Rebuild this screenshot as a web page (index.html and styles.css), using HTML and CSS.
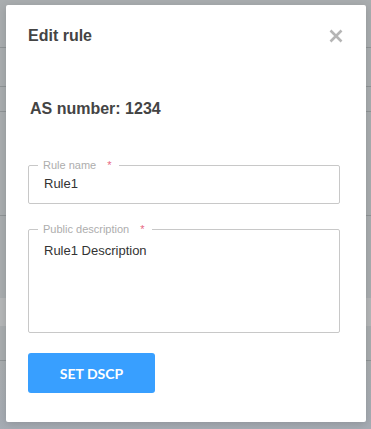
FILE: index.html
```html
<!DOCTYPE html>
<html lang="en">
<head>
    <meta charset="UTF-8">
    <meta name="viewport" content="width=device-width, initial-scale=1.0">
    <title>Edit rule</title>
    <link rel="stylesheet" href="styles.css">
</head>
<body>
    <div class="page">
        <div class="row" style="height: 48px;"></div>
        <div class="row" style="height: 39px;"></div>
        <div class="row" style="height: 25px;"></div>
        <div class="row" style="height: 104px;"></div>
        <div class="row plain" style="height: 82px;"></div>
        <div class="row light" style="height: 28px;"></div>
        <div class="row" style="height: 35px;"></div>
        <div class="row foot"></div>
    </div>

    <div class="modal">
        <div class="modal-header">
            <h2>Edit rule</h2>
            <button class="close" aria-label="Close">
                <svg width="14" height="14" viewBox="0 0 14 14">
                    <path d="M1.5 1.5 L12.5 12.5 M12.5 1.5 L1.5 12.5" stroke="#b5b5b5" stroke-width="2.6" stroke-linecap="butt"/>
                </svg>
            </button>
        </div>

        <div class="as-number">AS number: 1234</div>

        <fieldset class="field">
            <legend>Rule name <span class="req">*</span></legend>
            <div class="value">Rule1</div>
        </fieldset>

        <fieldset class="field area">
            <legend>Public description <span class="req">*</span></legend>
            <div class="value">Rule1 Description</div>
        </fieldset>

        <button class="btn">SET DSCP</button>
    </div>
</body>
</html>
```

FILE: styles.css
```css
* {
    margin: 0;
    padding: 0;
    box-sizing: border-box;
}

body {
    font-family: 'Liberation Sans', Arial, sans-serif;
    background: #a9adaf;
    width: 371px;
    height: 429px;
    overflow: hidden;
    position: relative;
}

.page {
    display: flex;
    flex-direction: column;
}

.row {
    border-bottom: 1px solid #8f9496;
}

.row.plain {
    border-bottom: none;
}

.row.light {
    background: #b5b7b8;
    border-bottom: none;
}

.row.foot {
    height: 70px;
    background: linear-gradient(180deg, #a9adaf 0%, #a6acb4 100%);
    border-bottom: none;
}

.modal {
    position: absolute;
    left: 6px;
    top: 5px;
    width: 360px;
    height: 417px;
    background: #fff;
    border-radius: 2px;
    box-shadow: 0 2px 8px rgba(0,0,0,0.15);
    padding: 22px 26px 0 22px;
}

.modal-header {
    display: flex;
    justify-content: space-between;
    align-items: center;
    height: 18px;
}

.modal-header h2 {
    font-size: 16px;
    font-weight: bold;
    color: #444;
}

.close {
    background: none;
    border: none;
    width: 14px;
    height: 14px;
    display: flex;
    margin-right: -3px;
}

.as-number {
    margin-top: 55px;
    margin-left: 2px;
    font-size: 16px;
    font-weight: bold;
    color: #444;
}

.field {
    margin-top: 41px;
    width: 312px;
    height: 45px;
    border: 1px solid #c8c8c8;
    border-radius: 2px;
    padding: 0 15px;
}

.field.area {
    margin-top: 19px;
    height: 110px;
}

.field legend {
    font-size: 11px;
    color: #adadad;
    padding: 0 7px 0 5px;
    margin-left: -6px;
    line-height: 12px;
}

.req {
    color: #e8677f;
    margin-left: 8px;
}

.value {
    font-size: 13px;
    color: #333;
    margin-top: 5px;
    line-height: 16px;
}

.area .value {
    margin-top: 8px;
}

.btn {
    margin-top: 20px;
    width: 127px;
    height: 40px;
    background: #389fff;
    color: #fff;
    border: none;
    border-radius: 3px;
    font-family: Lato, 'Liberation Sans', sans-serif;
    font-weight: bold;
    font-size: 14px;
    display: block;
}
```
